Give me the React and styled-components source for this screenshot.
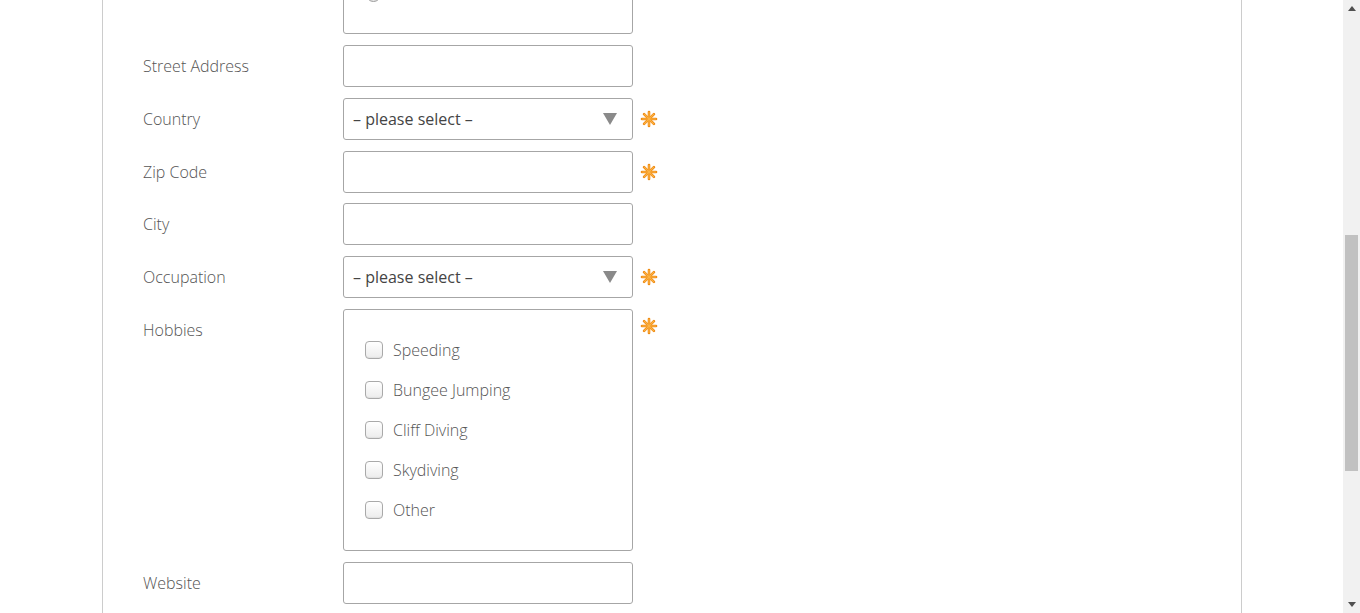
import React from "react";
import styled, { createGlobalStyle } from "styled-components";

const GlobalStyle = createGlobalStyle`
    html, body {
        margin: 0;
        padding: 0;
        height: 100%;
        overflow: hidden;
        background: #ffffff;
    }
    #root {
        height: 100%;
    }
`;

const Page = styled.div`
    display: flex;
    height: 613px;
    font-family: "Open Sans", "Liberation Sans", sans-serif;
`;

const Viewport = styled.div`
    flex: 1;
    overflow: hidden;
`;

const Panel = styled.div`
    display: flow-root;
    width: 1138px;
    margin-left: 102px;
    height: 100%;
    border-left: 1px solid #cccccc;
    border-right: 1px solid #cccccc;
`;

const Form = styled.form`
    display: flex;
    flex-direction: column;
    gap: 10.8px;
    padding-left: 40px;
    margin-top: -55.8px;
`;

const Row = styled.div`
    display: grid;
    grid-template-columns: 200px 290px 25px;
    align-items: ${(props) => (props.$top ? "start" : "center")};
`;

const Label = styled.label`
    font-size: 16px;
    font-weight: 300;
    color: #555555;
    padding-top: ${(props) => (props.$top ? "10px" : "0")};
`;

const Input = styled.input`
    box-sizing: border-box;
    width: 290px;
    height: 42px;
    margin: 0;
    border: 1px solid #a6a6a6;
    border-radius: 3px;
    background: #ffffff;
    font-family: inherit;
    font-size: 16px;
    padding: 0 9px;
`;

const Select = styled.div`
    box-sizing: border-box;
    width: 290px;
    height: 42px;
    border: 1px solid #a6a6a6;
    border-radius: 3px;
    background: #ffffff;
    display: flex;
    align-items: center;
    justify-content: space-between;
    padding: 0 15px 0 9px;
    font-size: 16px;
    color: #444444;
`;

const GroupBox = styled.div`
    box-sizing: border-box;
    width: 290px;
    height: ${(props) => props.$height}px;
    border: 1px solid #a6a6a6;
    border-radius: 3px;
    background: #ffffff;
    display: flex;
    flex-direction: column;
    justify-content: ${(props) => (props.$end ? "flex-end" : "flex-start")};
    padding: ${(props) => (props.$end ? "0 0 31px 22px" : "20px 0 20px 21px")};
`;

const Radio = styled.span`
    display: block;
    width: 13px;
    height: 13px;
    border-radius: 50%;
    border: 1px solid #9a9a9a;
    background: linear-gradient(#ffffff, #e6e6e6);
`;

const Option = styled.div`
    display: flex;
    align-items: center;
    height: 40px;
    gap: 10px;
    font-size: 16px;
    font-weight: 300;
    color: #555555;
`;

const Check = styled.span`
    box-sizing: border-box;
    width: 18px;
    height: 18px;
    border: 1px solid #a9a9a9;
    border-radius: 4px;
    background: linear-gradient(#ffffff, #ececec);
    box-shadow: inset 0 -1px 1px rgba(0, 0, 0, 0.05);
`;

const Required = styled.span`
    display: flex;
    justify-content: flex-end;
    padding-top: ${(props) => (props.$top ? "8px" : "0")};
`;

const Scrollbar = styled.div`
    width: 17px;
    background: #f1f1f1;
    display: flex;
    flex-direction: column;
    align-items: center;
`;

const ScrollArrow = styled.div`
    height: 17px;
    display: flex;
    align-items: center;
    justify-content: center;
`;

const ScrollSpace = styled.div`
    height: ${(props) => props.$h}px;
`;

const Thumb = styled.div`
    width: 13px;
    height: 236px;
    background: #c1c1c1;
`;

const Asterisk = () => (
    <svg width="18" height="18" viewBox="0 0 18 18">
        <g strokeLinecap="round">
            {[0, 45, 90, 135].map((a) => (
                <line
                    key={a}
                    x1="9"
                    y1="2"
                    x2="9"
                    y2="16"
                    stroke="#f08c14"
                    strokeWidth="2.6"
                    transform={`rotate(${a} 9 9)`}
                />
            ))}
            {[0, 45, 90, 135].map((a) => (
                <line
                    key={"i" + a}
                    x1="9"
                    y1="2.6"
                    x2="9"
                    y2="15.4"
                    stroke="#fbb447"
                    strokeWidth="1.1"
                    transform={`rotate(${a} 9 9)`}
                />
            ))}
        </g>
    </svg>
);

const Caret = () => (
    <svg width="14" height="12" viewBox="0 0 14 12">
        <polygon points="0,0 14,0 7,12" fill="#8a8a8a" />
    </svg>
);

const hobbies = ["Speeding", "Bungee Jumping", "Cliff Diving", "Skydiving", "Other"];

const App = () => {
    return (
        <Page>
            <GlobalStyle />
            <Viewport>
                <Panel>
                    <Form>
                        <Row>
                            <span />
                            <GroupBox $height={90} $end>
                                <Radio />
                            </GroupBox>
                        </Row>
                        <Row>
                            <Label>Street Address</Label>
                            <Input />
                        </Row>
                        <Row>
                            <Label>Country</Label>
                            <Select>
                                <span>– please select –</span>
                                <Caret />
                            </Select>
                            <Required>
                                <Asterisk />
                            </Required>
                        </Row>
                        <Row>
                            <Label>Zip Code</Label>
                            <Input />
                            <Required>
                                <Asterisk />
                            </Required>
                        </Row>
                        <Row>
                            <Label>City</Label>
                            <Input />
                        </Row>
                        <Row>
                            <Label>Occupation</Label>
                            <Select>
                                <span>– please select –</span>
                                <Caret />
                            </Select>
                            <Required>
                                <Asterisk />
                            </Required>
                        </Row>
                        <Row $top>
                            <Label $top>Hobbies</Label>
                            <GroupBox $height={242}>
                                {hobbies.map((h) => (
                                    <Option key={h}>
                                        <Check />
                                        <span>{h}</span>
                                    </Option>
                                ))}
                            </GroupBox>
                            <Required $top>
                                <Asterisk />
                            </Required>
                        </Row>
                        <Row>
                            <Label>Website</Label>
                            <Input />
                        </Row>
                    </Form>
                </Panel>
            </Viewport>
            <Scrollbar>
                <ScrollArrow>
                    <svg width="8" height="5" viewBox="0 0 8 5">
                        <polygon points="0,5 8,5 4,0" fill="#505050" />
                    </svg>
                </ScrollArrow>
                <ScrollSpace $h={218} />
                <Thumb />
                <ScrollSpace $h={125} />
                <ScrollArrow>
                    <svg width="8" height="5" viewBox="0 0 8 5">
                        <polygon points="0,0 8,0 4,5" fill="#505050" />
                    </svg>
                </ScrollArrow>
            </Scrollbar>
        </Page>
    );
};

export default App;
